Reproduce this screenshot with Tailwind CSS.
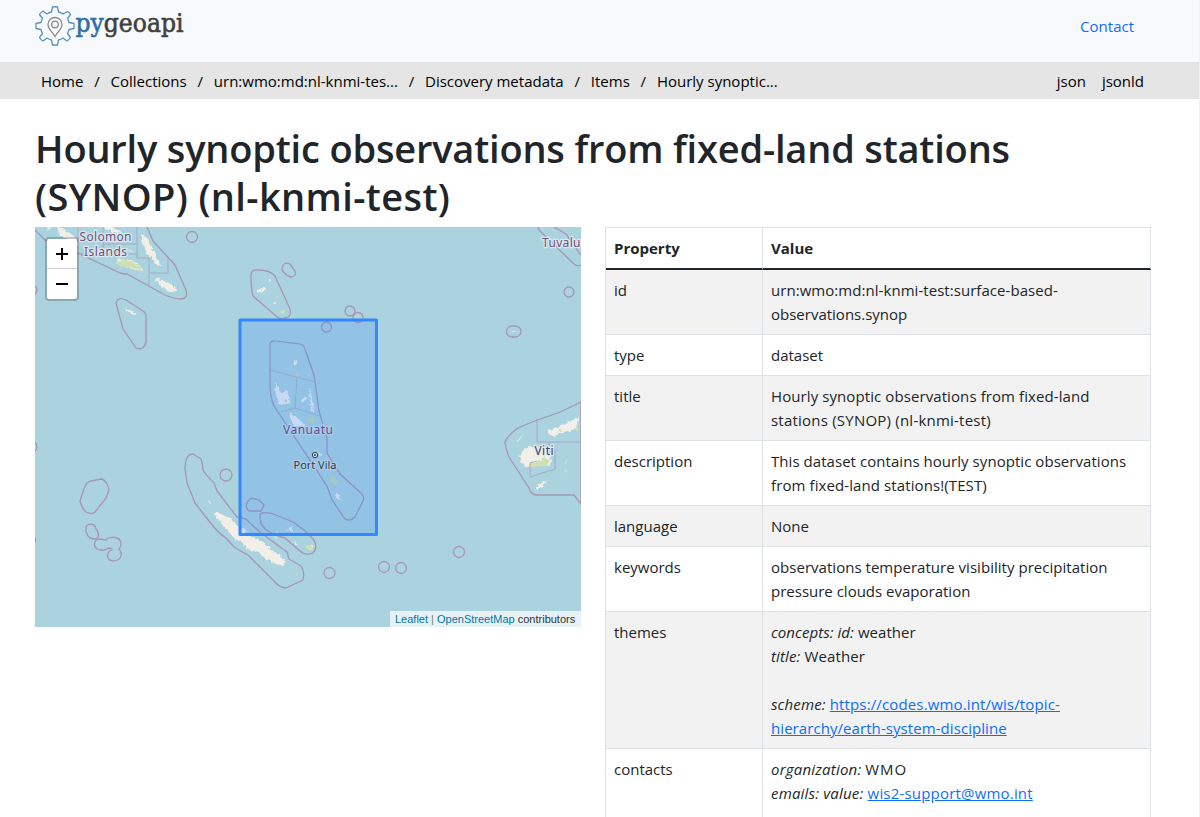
<!DOCTYPE html>
<html lang="en">
<head>
<meta charset="utf-8">
<title>Hourly synoptic observations from fixed-land stations (SYNOP) (nl-knmi-test)</title>
<script src="https://cdn.jsdelivr.net/npm/@tailwindcss/browser@4"></script>
</head>
<body class="bg-white h-[817px] overflow-hidden border-r border-[#f1f1f1] font-['Open_Sans',sans-serif] text-[15px] leading-6 text-[#212529]">
<header class="h-[62px] bg-[#f8f9fc] flex justify-between pl-[35px] pr-[65px]">
  <svg class="w-[152px] h-[50px]" viewBox="35 0 152 50" fill="none">
    <path d="M52.500 7Q55 6.500 57.500 7L58.500 12Q61 12.500 63 14L67.500 11.500Q69.500 12.500 70.500 14.500L67.500 18.500Q68.500 20 69 22.500L74 23.500V28.500L69 29.500Q68.500 32 67.500 33.500L70.500 37.500Q69 40 67 41L63 38Q61 39.500 58.500 40L57.500 45H52.500L51.500 40Q49 39.500 47 38L43 41Q41 40 39.500 37.500L42.500 33.500Q41.500 32 41 29.500L36 28.500V23.500L41 22.500Q41.500 20 42.500 18.500L39.500 14.500Q41 12 43 11L47 14Q49 12.500 51.500 12z" stroke="#5b94c0" stroke-width="1.300" stroke-linejoin="round"/>
    <path d="M55 36.500c-2-4-7-7-7-12a7 7 0 0 1 14 0c0 5-5 8-7 12z" stroke="#8b8b8b" stroke-width="1.300"/>
    <circle cx="55" cy="24.500" r="3.300" stroke="#8b8b8b" stroke-width="1.300"/>
    <text x="75.500" y="32" textLength="108" lengthAdjust="spacingAndGlyphs" font-family="DejaVu Serif" font-size="25.500" stroke-width=".6" fill="#3f3f3f" stroke="#3f3f3f"><tspan fill="#2f6fa5" stroke="#2f6fa5">py</tspan>geoapi</text>
  </svg>
  <a class="text-[#0d6efd] mt-[14px]">Contact</a>
</header>
<nav class="h-[37px] bg-[#e5e5e5] border-t border-[#dee2e6] text-black flex items-center justify-between pl-[41px] pr-[55px] whitespace-nowrap">
  <div class="flex gap-[10.800px]"><span>Home</span><span>/</span><span>Collections</span><span>/</span><span>urn:wmo:md:nl-knmi-tes...</span><span>/</span><span>Discovery metadata</span><span>/</span><span>Items</span><span>/</span><span>Hourly synoptic...</span></div>
  <div class="flex gap-4"><span>json</span><span>jsonld</span></div>
</nav>
<main class="pl-[35px] pt-[25px]">
  <h1 class="text-[38px] leading-[48px] font-semibold whitespace-nowrap h-[103px]"><span class="tracking-[-0.18px]">Hourly synoptic observations from fixed-land stations</span><br><span class="tracking-[0.38px]">(SYNOP) (nl-knmi-test)</span></h1>
  <div class="flex gap-6 items-start">
    <div class="relative w-[546px] h-[400px] shrink-0 overflow-hidden bg-[#aad3df]">
      <svg class="block w-[546px] h-[400px]" viewBox="35 227 546 400" fill="none">
        <filter id="coast" x="-5%" y="-5%" width="110%" height="110%"><feTurbulence type="fractalNoise" baseFrequency=".35" numOctaves="2" seed="4"/><feDisplacementMap in="SourceGraphic" scale="5" xChannelSelector="R" yChannelSelector="G"/></filter>
        <g filter="url(#coast)">
        <g fill="#f2efe9">
          <path d="M47 227l4 0-2 4zM57 228l6 0 5 5 6 2 5 8-4 3-9-8-7-4zM102 227h10l10 5-4 2zM142 235l6 3 2 7 5 7 1 6 6 8-5-1-7-9-4-2-2-9-3-4zM155 278l9 3 6 2 5 5 2 3-8 1-6-4-5-5zM125 308l6 3 7 4-4 0-8-4zM117 258l8 2 8 0 9 8 2 3-8-1-11-3-8-4zM128 249l6 3-3 1z"/>
          <path d="M257 290l9-3-1 4-8 2z"/>
          <path d="M216 511l8 5 5 1 7 7 6 6 10 7 11 5 9 8 6 4 8 7-3 5-6-2-11-5-7-6-10-3-7-7-8-5-7-8-6-8-6-6z"/>
          <path d="M519 457l5-8 7-3 13 2 6 5 1 10-3 3-12 0-10 1-5-5zM547 431l8-3 7-3 8-4 9-3-3 10-11 5-7 0-3 4-6-3zM535 487l4-3 8-3-3 4-6 4z"/>
          <path d="M307 546l5-1 2 5-5-3zM292 541l5 3 3 2-5-2z"/>
        </g>
        <g fill="#cde2b0">
          <path d="M118 260l14 1 4 4 5 2 0 3-9-2-6-1-7-1zM280 312l4-2 2 2-3 2zM305 546l6-1 1 4-3 1zM295 572l3 3-3-1zM529 463l9-2 7-4 4 4-2 5-8 0-9 1zM559 429l4 1-4 2zM574 430l4-4 1 6zM565 460l2 1-2 3zM565 469l3 2-3 3z"/>
          <path d="M274 302h2v2h-2zM269 279h2v2h-2z" fill="#dce8dc"/>
        </g>
        </g>
        <path d="M512 331h4l-1 1h-3zM207 499l4 4-1 1zM517 441l8-9-7 10z" fill="#e0e7e2"/>
        <g stroke="#a795b4" stroke-width="1.300" stroke-linejoin="round">
          <path d="M35 230L45 240 78 253 120 273Q124 274 127 274L165 295Q174 299 182 299 188 298 186 290L175 265 153 241 147 227M116 303Q118 296 126 300L143 311Q146 313 146 316V342Q144 351 136 348L123 329z"/>
          <path d="M251 274Q252 269 258 270 270 270 275 276L290 309Q292 318 284 318 280 320 276 316L253 296Q251 290 251 274zM282 268Q284 261 290 264L295 271Q297 275 292 277 287 277 282 270z"/>
          <path d="M538 227Q538 230 541 232L574 264Q578 267 581 265M554 227L566 234 581 255"/>
          <path d="M581 402L558 413 537 420 518 428Q508 435 505 442 506 450 509 457L529 488Q531 495 537 495H574L581 504z"/>
          <path d="M185 469Q185 454 193 454L201 459Q203 465 203 470 206 475 214 483L217 491 237 517 246 519Q253 526 261 533L287 552 289 559 301 566Q305 571 303 580L286 588Q280 588 274 581L248 555Q240 551 234 547L226 538Q218 533 209 521L195 503Q190 490 187 483z"/>
          <path d="M260 514Q265 511 276 515L293 522 304 530 314 540Q318 548 313 553 305 556 300 551L285 538Q273 535 265 529 259 523 260 514z"/>
          <path d="M84 489Q86 482 91 481L101 479Q104 479 107 484 109 487 109 490L106 498 95 512Q92 515 86 512 82 509 80 501z"/>
          <path d="M86 527C88 523 95 523 96 529 100 534 99 539 94 539 88 539 85 532 86 527z"/>
          <path d="M106 540C109 536 121 536 121 544Q121 547 119 549C124 555 120 561 113 561 106 560 106 552 112 550Q113 548 108 548 105 551 101 550C92 549 93 539 100 539z"/>
          <circle cx="192" cy="237" r="5.500"/><circle cx="350" cy="311" r="5"/><circle cx="358" cy="317.500" r="5"/><circle cx="326.500" cy="327" r="5"/><circle cx="569" cy="292" r="5"/><rect x="506.500" y="326" width="14.500" height="11" rx="5.500"/>
          <circle cx="226" cy="475" r="6"/><circle cx="329.500" cy="573" r="5.500"/><circle cx="384" cy="567" r="5.500"/><circle cx="401" cy="568" r="5.500"/><circle cx="459" cy="552" r="5.500"/><circle cx="32" cy="290" r="5"/><circle cx="32" cy="447" r="5"/><circle cx="31" cy="540" r="4.500"/>
          <path d="M248 501L252 498 259 500 264 505 261 511H249Q244 507 248 501z"/>
        </g>
        <path d="M78 227V243M103 227V256M137 227V258H149V286M103 244H137M80 254H137M149 273H168V257M537 420V442H581M549 442V456M555 449V469L530 477V463L537 461" stroke="#a79fbd" stroke-width=".8"/>
        <rect x="240" y="320" width="136.500" height="214.500" fill="#3388ff" fill-opacity=".2"/>
        <path d="M270 345Q270 340 276 341L300 344Q304 345 305 349L314 375Q317 395 319 411L327 438V453L340 474 361 493Q365 497 363 501L355 517Q350 522 345 519L332 500 327 486 274 406Q270 396 270 386z" stroke="#8c8fc4" stroke-width="1.200"/>
        <path d="M270 370L315 382M297 378L295 408 319 416M281 412L295 408" stroke="#8ba4cf" stroke-width=".8"/>
        <g filter="url(#coast)">
        <path d="M275 382l4 6 2 5 6-2 2 5 1 9-11-1-3-8zM289 411l5 4 7 6 4 5-11 0-4-8zM309 388l3 8 2 17-3-2zM300 401l5-4 2 1-3 4zM294 360h3v5h-3zM336 492l5 6-2 3-3-4zM274 538l2-5 2-3-2 8zM287 530l6-5 0 7zM317 452l4 2-2 3zM240 529l5 0 2 3-4 1z" fill="#c9d9f3"/>
        <path d="M295 372l4-1v4h-3zM307 419l6-2 2 5-5 1zM331 476l4 2 4 6-5 1-4-4zM285 399h3v3h-3zM348 513h4v3h-3zM313 451l5-1v3z" fill="#a0cbc5"/>
        </g>
        <rect x="240" y="320" width="136.500" height="214.500" stroke="#3388ff" stroke-width="3" stroke-linejoin="round"/>
        <circle cx="315" cy="455" r="2.700" fill="#dce7f7" stroke="#333b4c"/><circle cx="315" cy="455" r="1.100" fill="#333b4c"/>
        <g font-family="Noto Sans" font-size="12" paint-order="stroke" stroke-width="2.500" stroke-linejoin="round" stroke="#dce9ef" fill="#6d4f79">
          <text x="79.500" y="241" textLength="52">Solomon</text><text x="84" y="256" textLength="43">Islands</text>
          <text x="542" y="247" textLength="38.500">Tuvalu</text>
          <text x="283" y="434" textLength="50" stroke="#abcdec" fill="#5f4c8c">Vanuatu</text>
          <text x="293.500" y="469" font-size="11" textLength="43" stroke="#abcdec" fill="#303848">Port Vila</text>
          <text x="534.500" y="455" textLength="19" fill="#523a61">Viti</text>
        </g>
      </svg>
      <div class="absolute left-[10px] top-[10px] w-[34px] h-[64px] rounded-[4px] border-2 border-black/20 bg-clip-padding bg-white">
        <svg class="block w-[30px] h-[60px]" viewBox="0 0 30 60" stroke="black" stroke-width="2"><path d="M9 15h12M15 9v12M9 45h12"/><path d="M0 29.500h30" stroke="#ccc" stroke-width="1"/></svg>
      </div>
      <div class="absolute right-0 bottom-0 h-4 w-[191px] pl-[5px] bg-white/70 font-['Liberation_Sans',sans-serif] text-[11px] leading-4 text-[#333] whitespace-nowrap"><span class="text-[#0078a8]">Leaflet</span> <span class="text-[#777]">|</span> <span class="text-[#0078a8]">OpenStreetMap</span> contributors</div>
    </div>
    <table class="w-[546px] table-fixed border-separate border-spacing-0 border-l border-t border-[#dee2e6] whitespace-nowrap [&_td]:border-r [&_td]:border-b [&_td]:border-[#dee2e6] [&_td]:p-2 [&_td]:align-top [&_th]:text-left [&_th]:p-2 [&_th]:border-r [&_th]:border-r-[#dee2e6] [&_th]:border-b-2 [&_th]:border-b-[#212529] [&_tbody_tr:nth-child(odd)]:bg-[#f2f2f2]">
      <colgroup><col class="w-[157px]"><col class="w-[388px]"></colgroup>
      <thead><tr><th>Property</th><th>Value</th></tr></thead>
      <tbody>
        <tr><td>id</td><td class="tracking-[0.05px]">urn:wmo:md:nl-knmi-test:surface-based-<br><span class="tracking-normal">observations.synop</span></td></tr>
        <tr><td>type</td><td>dataset</td></tr>
        <tr><td>title</td><td><span class="tracking-[0.09px]">Hourly synoptic observations from fixed-land</span><br><span class="tracking-[0.22px]">stations (SYNOP) (nl-knmi-test)</span></td></tr>
        <tr><td>description</td><td class="tracking-[0.05px]">This dataset contains hourly synoptic observations<br><span class="tracking-[0.1px]">from fixed-land stations!(TEST)</span></td></tr>
        <tr><td>language</td><td>None</td></tr>
        <tr><td>keywords</td><td><span class="tracking-[0.03px]">observations temperature visibility precipitation</span><br>pressure clouds evaporation</td></tr>
        <tr><td>themes</td><td><span class="tracking-[0.06px]"><i>concepts:</i> <i>id:</i> weather</span><br><span class="tracking-[0.13px]"><i>title:</i> Weather</span><br><br><span class="tracking-[0.14px]"><i>scheme:</i> <a class="text-[#0d6efd] underline">https://codes.wmo.int/wis/topic-</a></span><br><a class="text-[#0d6efd] underline tracking-[0.07px]">hierarchy/earth-system-discipline</a></td></tr>
        <tr><td>contacts</td><td><span class="tracking-[0.2px]"><i>organization:</i></span> <span class="tracking-[0.9px]">WMO</span><br><span class="tracking-[0.19px]"><i>emails:</i> <i>value:</i> <a class="text-[#0d6efd] underline">wis2-support@wmo.int</a></span><br><br></td></tr>
      </tbody>
    </table>
  </div>
</main>
</body>
</html>
